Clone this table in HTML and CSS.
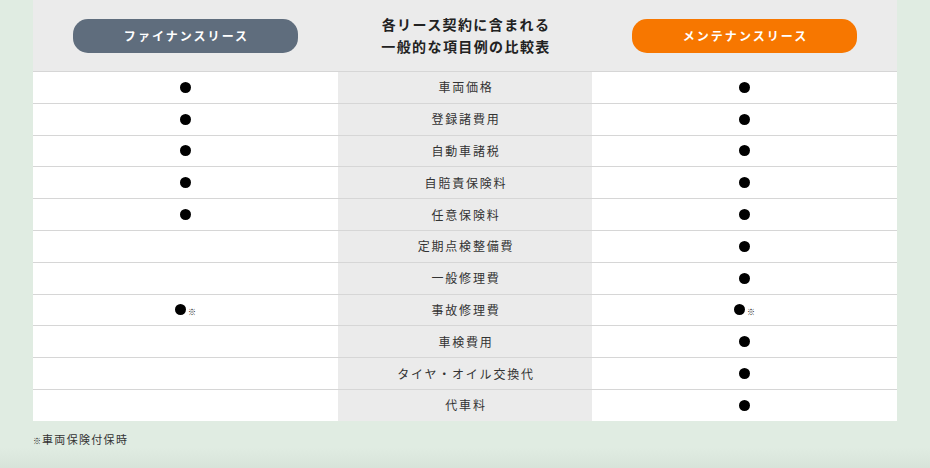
FILE: index.html
```html
<!DOCTYPE html>
<html lang="ja">
<head>
<meta charset="utf-8">
<title>リース比較表</title>
<link rel="stylesheet" href="styles.css">
</head>
<body>
<div class="page">
  <div class="table">
    <div class="head">
      <div class="cell"><span class="pill pill-finance">ファイナンスリース</span></div>
      <div class="cell mid head-title">各リース契約に含まれる<br>一般的な項目例の比較表</div>
      <div class="cell"><span class="pill pill-maint">メンテナンスリース</span></div>
    </div>
    <div class="row"><div class="cell"><span class="dot"></span></div><div class="cell mid">車両価格</div><div class="cell"><span class="dot"></span></div></div>
    <div class="row"><div class="cell"><span class="dot"></span></div><div class="cell mid">登録諸費用</div><div class="cell"><span class="dot"></span></div></div>
    <div class="row"><div class="cell"><span class="dot"></span></div><div class="cell mid">自動車諸税</div><div class="cell"><span class="dot"></span></div></div>
    <div class="row"><div class="cell"><span class="dot"></span></div><div class="cell mid">自賠責保険料</div><div class="cell"><span class="dot"></span></div></div>
    <div class="row"><div class="cell"><span class="dot"></span></div><div class="cell mid">任意保険料</div><div class="cell"><span class="dot"></span></div></div>
    <div class="row"><div class="cell"></div><div class="cell mid">定期点検整備費</div><div class="cell"><span class="dot"></span></div></div>
    <div class="row"><div class="cell"></div><div class="cell mid">一般修理費</div><div class="cell"><span class="dot"></span></div></div>
    <div class="row"><div class="cell"><span class="dot"></span><span class="note">※</span></div><div class="cell mid">事故修理費</div><div class="cell"><span class="dot"></span><span class="note">※</span></div></div>
    <div class="row"><div class="cell"></div><div class="cell mid">車検費用</div><div class="cell"><span class="dot"></span></div></div>
    <div class="row"><div class="cell"></div><div class="cell mid">タイヤ・オイル交換代</div><div class="cell"><span class="dot"></span></div></div>
    <div class="row"><div class="cell"></div><div class="cell mid">代車料</div><div class="cell"><span class="dot"></span></div></div>
  </div>
  <p class="footnote"><span class="fn-mark">※</span>車両保険付保時</p>
</div>
</body>
</html>
```

FILE: styles.css
```css
html, body {
  margin: 0;
  padding: 0;
}
body {
  width: 930px;
  height: 468px;
  overflow: hidden;
  background: linear-gradient(to bottom, #e0ece2 0, #e0ece2 448px, #d7e3d9 468px);
  font-family: "Noto Sans CJK JP", "Noto Sans", sans-serif;
  color: #333;
}
.page {
  padding-left: 33px;
}
.table {
  width: 864px;
  background: #fff;
}
.head,
.row {
  display: grid;
  grid-template-columns: 305px 254px 305px;
}
.head {
  height: 71px;
  background: #ebebeb;
}
.row {
  height: 31.8px;
  box-sizing: border-box;
  border-top: 1px solid #d6d6d6;
}
.cell {
  display: flex;
  align-items: center;
  justify-content: center;
}
.mid {
  background: #ebebeb;
  font-size: 12px;
  letter-spacing: 0.15em;
  line-height: 1;
  padding-left: 2px;
}
.head-title {
  font-size: 14px;
  font-weight: bold;
  line-height: 22px;
  letter-spacing: 0.1em;
  text-align: center;
  color: #222;
  padding-bottom: 2px;
}
.pill {
  width: 225px;
  height: 34px;
  border-radius: 15px;
  display: flex;
  align-items: center;
  justify-content: center;
  color: #fff;
  font-size: 12px;
  font-weight: bold;
  letter-spacing: 0.17em;
  padding-left: 2px;
  box-sizing: border-box;
}
.pill-finance {
  background: #5f6d7d;
}
.pill-maint {
  background: #f77700;
}
.dot {
  width: 11px;
  height: 11px;
  border-radius: 50%;
  background: #000;
  display: inline-block;
}
.note {
  font-size: 8px;
  font-weight: bold;
  line-height: 1;
  margin-left: 2px;
  margin-top: 4px;
  color: #111;
}
.footnote {
  margin: 11px 0 0;
  font-size: 11px;
  letter-spacing: 0.12em;
  line-height: 14px;
  color: #333;
}
.fn-mark {
  font-size: 8px;
  font-weight: bold;
  color: #111;
  letter-spacing: 0;
  margin-right: 1px;
}
```
